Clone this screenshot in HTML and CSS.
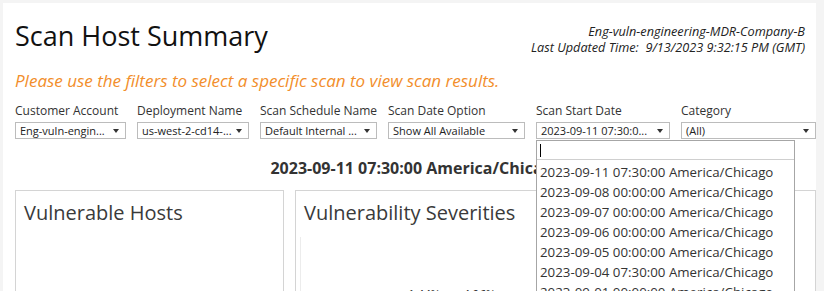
FILE: index.html
```html
<!DOCTYPE html>
<html lang="en">
<head>
    <meta charset="UTF-8">
    <meta name="viewport" content="width=device-width, initial-scale=1.0">
    <title>Scan Host Summary</title>
    <link rel="stylesheet" href="styles.css">
</head>
<body>
    <div class="page">
        <div class="top">
            <h1>Scan Host Summary</h1>
            <div class="meta">
                <div>Eng-vuln-engineering-MDR-Company-B</div>
                <div>Last Updated Time:&nbsp; 9/13/2023 9:32:15 PM (GMT)</div>
            </div>
        </div>

        <p class="hint">Please use the filters to select a specific scan to view scan results.</p>

        <div class="filters">
            <div class="filter f-account">
                <div class="label">Customer Account</div>
                <div class="select"><span>Eng-vuln-engin...</span><i class="arrow"></i></div>
            </div>
            <div class="filter f-deploy">
                <div class="label">Deployment Name</div>
                <div class="select"><span>us-west-2-cd14-...</span><i class="arrow"></i></div>
            </div>
            <div class="filter f-schedule">
                <div class="label">Scan Schedule Name</div>
                <div class="select"><span>Default Internal ...</span><i class="arrow"></i></div>
            </div>
            <div class="filter f-option">
                <div class="label">Scan Date Option</div>
                <div class="select"><span>Show All Available</span><i class="arrow"></i></div>
            </div>
            <div class="filter f-start">
                <div class="label">Scan Start Date</div>
                <div class="select"><span>2023-09-11 07:30:0...</span><i class="arrow"></i></div>
                <div class="dropdown">
                    <div class="search"><span class="cursor"></span></div>
                    <ul class="options">
                        <li>2023-09-11 07:30:00 America/Chicago</li>
                        <li>2023-09-08 00:00:00 America/Chicago</li>
                        <li>2023-09-07 00:00:00 America/Chicago</li>
                        <li>2023-09-06 00:00:00 America/Chicago</li>
                        <li>2023-09-05 00:00:00 America/Chicago</li>
                        <li>2023-09-04 07:30:00 America/Chicago</li>
                        <li>2023-09-01 00:00:00 America/Chicago</li>
                    </ul>
                </div>
            </div>
            <div class="filter f-category">
                <div class="label">Category</div>
                <div class="select"><span>(All)</span><i class="arrow"></i></div>
            </div>
        </div>

        <h2 class="scan-title">2023-09-11 07:30:00 America/Chicago</h2>

        <div class="cards">
            <div class="card card-hosts">
                <h3>Vulnerable Hosts</h3>
            </div>
            <div class="card card-sev">
                <h3>Vulnerability Severities</h3>
                <div class="chart">
                    <span class="pct">1.44%</span>
                    <span class="pct">4.96%</span>
                </div>
            </div>
        </div>
    </div>
</body>
</html>
```

FILE: styles.css
```css
body {
    margin: 0;
    background-color: #f4f4f4;
    font-family: "Open Sans", "Liberation Sans", sans-serif;
    color: #333;
}

.page {
    margin: 3px 0 0 3px;
    width: 813px;
    height: 288px;
    background: #fff;
    overflow: hidden;
    padding: 16px 0 0 12px;
    box-sizing: border-box;
}

.top {
    display: flex;
    justify-content: space-between;
    align-items: flex-start;
    padding-right: 11px;
}

h1 {
    margin: 0;
    font-size: 27px;
    line-height: 34px;
    font-weight: normal;
    color: #111;
}

.meta {
    margin-top: 4px;
    font-size: 12.7px;
    line-height: 16px;
    font-style: italic;
    text-align: right;
    color: #222;
}

.hint {
    margin: 16px 0 0;
    font-size: 17px;
    line-height: 20px;
    font-style: italic;
    color: #f28e2b;
}

.filters {
    display: flex;
    gap: 11px;
    margin-top: 12px;
}

.filter {
    position: relative;
}

.f-account { width: 111px; }
.f-deploy { width: 112px; }
.f-schedule { width: 117px; }
.f-option { width: 137px; }
.f-start { width: 134px; }
.f-category { width: 135px; }

.label {
    font-size: 12px;
    line-height: 16px;
    margin-bottom: 3px;
    white-space: nowrap;
    color: #333;
}

.select {
    display: flex;
    justify-content: space-between;
    align-items: center;
    height: 17px;
    box-sizing: border-box;
    border: 1px solid #bcbcbc;
    padding: 0 6px 0 4px;
    font-size: 11px;
    line-height: 15px;
    white-space: nowrap;
    color: #222;
}

.arrow {
    width: 0;
    height: 0;
    border-left: 3.5px solid transparent;
    border-right: 3.5px solid transparent;
    border-top: 4px solid #333;
}

.dropdown {
    position: absolute;
    top: 100%;
    left: 0;
    margin-top: 1px;
    width: 259px;
    box-sizing: border-box;
    border: 1px solid #a6a6a6;
    background: #fff;
    z-index: 5;
}

.search {
    height: 19px;
    border-bottom: 1px solid #cfcfcf;
    padding: 3px 0 0 3px;
    box-sizing: border-box;
}

.cursor {
    display: block;
    width: 1px;
    height: 13px;
    background: #000;
}

.options {
    list-style: none;
    margin: 0;
    padding: 2px 0 0 3px;
    font-size: 13.3px;
    line-height: 20px;
    color: #333;
    white-space: nowrap;
}

.scan-title {
    margin: 19px 0 0;
    padding-left: 1px;
    text-align: center;
    font-size: 16px;
    line-height: 20px;
    font-weight: bold;
    color: #333;
}

.cards {
    display: flex;
    gap: 11px;
    margin-top: 12px;
}

.card {
    height: 200px;
    box-sizing: border-box;
    border: 1px solid #d4d4d4;
    padding: 9px 0 0;
}

.card-hosts { width: 269px; }
.card-sev { width: 521px; }

.card h3 {
    margin: 0;
    padding-left: 8px;
    font-size: 20px;
    line-height: 26px;
    font-weight: normal;
    color: #3a3a3a;
}

.chart {
    margin: 11px 0 0 4px;
    height: 160px;
    border-left: 1px solid #ececec;
    padding: 45px 0 0 106px;
    box-sizing: border-box;
}

.pct {
    display: inline-block;
    width: 51px;
    font-size: 12px;
    line-height: 16px;
    font-style: italic;
    color: #333;
}
```
